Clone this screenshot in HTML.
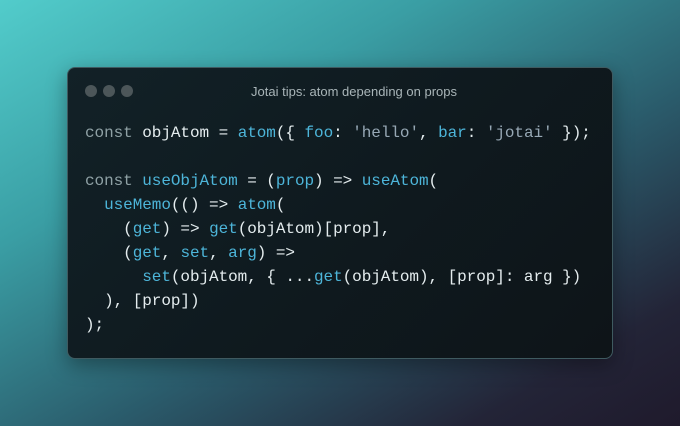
<!DOCTYPE html>
<html><head><style>
html,body{margin:0;padding:0}
body{width:680px;height:426px;overflow:hidden;background:linear-gradient(150deg,#52cccb 0%,#3a9ea4 30%,#2a5a6a 60%,#232437 85%,#1f1a2c 100%);position:relative;font-family:"Liberation Sans",sans-serif}
.win{position:absolute;left:67px;top:67px;width:544px;height:290px;border-radius:8px;background:linear-gradient(135deg,#122127 0%,#0f1a1f 50%,#0e1418 100%);border:1px solid #3f5a60;box-shadow:0 6px 20px rgba(0,0,0,.35)}
.dot{position:absolute;top:17px;width:12px;height:12px;border-radius:50%;background:#4c5659}
.title{position:absolute;top:16px;left:0;right:0;text-align:center;padding-left:28px;color:#a9b5b8;font-size:13px}
pre{position:absolute;left:17px;top:53px;margin:0;font-family:"Liberation Mono",monospace;font-size:16px;letter-spacing:-0.06px;line-height:24px;color:#e4ecee}
.k{color:#8fa1a5}.f{color:#4db5d9}.s{color:#97a8b5}
</style></head><body>
<div class="win">
<div class="dot" style="left:17px"></div><div class="dot" style="left:35px"></div><div class="dot" style="left:53px"></div>
<div class="title">Jotai tips: atom depending on props</div>
<pre><span class="k">const</span> objAtom = <span class="f">atom</span>({ <span class="f">foo</span>: <span class="s">'hello'</span>, <span class="f">bar</span>: <span class="s">'jotai'</span> });

<span class="k">const</span> <span class="f">useObjAtom</span> = (<span class="f">prop</span>) =&gt; <span class="f">useAtom</span>(
  <span class="f">useMemo</span>(() =&gt; <span class="f">atom</span>(
    (<span class="f">get</span>) =&gt; <span class="f">get</span>(objAtom)[prop],
    (<span class="f">get</span>, <span class="f">set</span>, <span class="f">arg</span>) =&gt;
      <span class="f">set</span>(objAtom, { ...<span class="f">get</span>(objAtom), [prop]: arg })
  ), [prop])
);</pre>
</div>
</body></html>
